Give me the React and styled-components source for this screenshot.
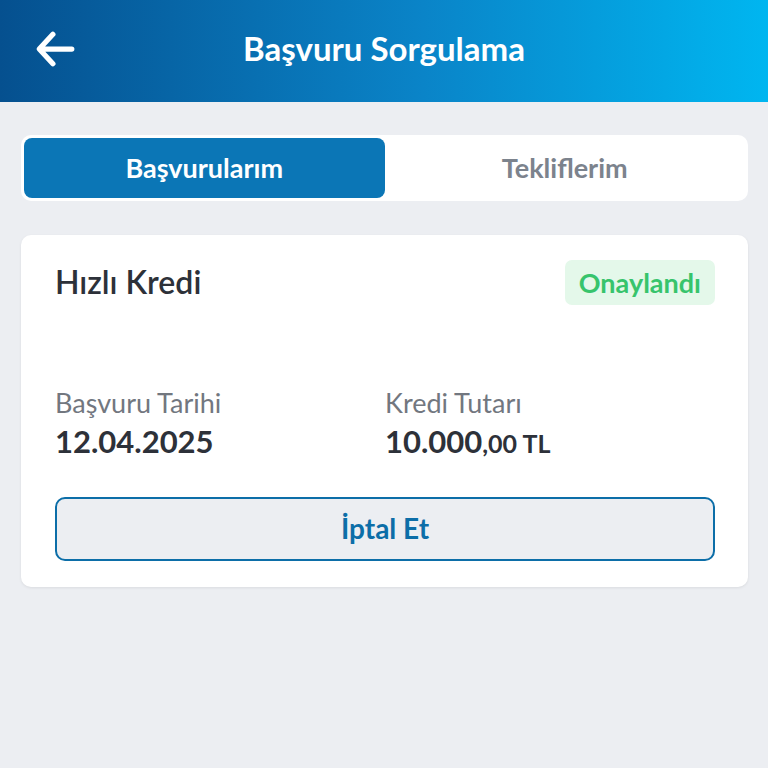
import React from 'react'
import styled, {createGlobalStyle} from 'styled-components'

const GlobalStyle = createGlobalStyle`
  html, body {
    margin: 0;
    padding: 0;
    background: #eceef2;
    font-family: Lato, "Noto Sans", sans-serif;
  }
`

const Page = styled.div`
  width: 768px;
  height: 768px;
  background: #eceef2;
  display: flex;
  flex-direction: column;
`

const Header = styled.header`
  height: 102px;
  flex: 0 0 auto;
  background: linear-gradient(90deg, #05508f 0%, #0a84c8 55%, #00b6f0 100%);
  display: flex;
  align-items: center;
  position: relative;
  color: white;
  & .back {
    position: absolute;
    left: 34px;
    top: 28px;
  }
  & h1 {
    flex: 1 1 auto;
    margin: 0;
    text-align: center;
    font-size: 33px;
    font-weight: 700;
    padding-bottom: 6px;
  }
`

const Content = styled.main`
  padding: 33px 20px 0 21px;
  display: flex;
  flex-direction: column;
  gap: 34px;
`

const Tabs = styled.div`
  background: white;
  border-radius: 10px;
  padding: 3px;
  display: grid;
  grid-template-columns: 1fr 1fr;
  height: 60px;
`

const Tab = styled.div`
  display: flex;
  align-items: center;
  justify-content: center;
  border-radius: 8px;
  font-size: 27px;
  font-weight: 700;
  padding-bottom: 1px;
  background: ${p => (p.$active ? '#0b76b6' : 'transparent')};
  color: ${p => (p.$active ? 'white' : '#7c838d')};
`

const Card = styled.section`
  background: white;
  border-radius: 10px;
  box-shadow: 0 1px 3px rgba(0, 0, 0, 0.08);
  padding: 25px 33px 26px 34px;
  display: flex;
  flex-direction: column;
`

const CardHead = styled.div`
  display: flex;
  justify-content: space-between;
  align-items: flex-start;
  & h2 {
    margin: 0;
    font-size: 32px;
    line-height: 44px;
    font-weight: 600;
    color: #2d3139;
  }
`

const Badge = styled.span`
  background: #e4f8ea;
  color: #37c46c;
  font-size: 27px;
  font-weight: 700;
  border-radius: 7px;
  height: 45px;
  padding: 0 14px;
  display: flex;
  align-items: center;
`

const Info = styled.div`
  display: grid;
  grid-template-columns: 330px 1fr;
  margin-top: 82px;
`

const Field = styled.div`
  display: flex;
  flex-direction: column;
  & .label {
    font-size: 27px;
    color: #72777f;
    line-height: 32px;
  }
  & .value {
    font-size: 31px;
    font-weight: 700;
    color: #2d3139;
    line-height: 40px;
    margin-top: 2px;
  }
  & .small {
    font-size: 25px;
  }
`

const CancelButton = styled.button`
  margin-top: 34px;
  height: 64px;
  border: 2px solid #0c6ea8;
  border-radius: 10px;
  background: #eceef2;
  color: #0c6ea8;
  font-family: inherit;
  font-size: 28px;
  font-weight: 700;
  padding: 0 0 2px;
`

const BackArrow = () => (
  <svg className="back" width="42" height="42" viewBox="0 0 40 40" fill="none">
    <path d="M36 20H6M18 6L5 20l13 14" stroke="white" strokeWidth="5" strokeLinecap="round" strokeLinejoin="round" />
  </svg>
)

export default function App() {
  return (
    <Page>
      <GlobalStyle />
      <Header>
        <BackArrow />
        <h1>Başvuru Sorgulama</h1>
      </Header>
      <Content>
        <Tabs>
          <Tab $active>Başvurularım</Tab>
          <Tab>Tekliflerim</Tab>
        </Tabs>
        <Card>
          <CardHead>
            <h2>Hızlı Kredi</h2>
            <Badge>Onaylandı</Badge>
          </CardHead>
          <Info>
            <Field>
              <span className="label">Başvuru Tarihi</span>
              <span className="value">12.04.2025</span>
            </Field>
            <Field>
              <span className="label">Kredi Tutarı</span>
              <span className="value">10.000<span className="small">,00 TL</span></span>
            </Field>
          </Info>
          <CancelButton>İptal Et</CancelButton>
        </Card>
      </Content>
    </Page>
  )
}
